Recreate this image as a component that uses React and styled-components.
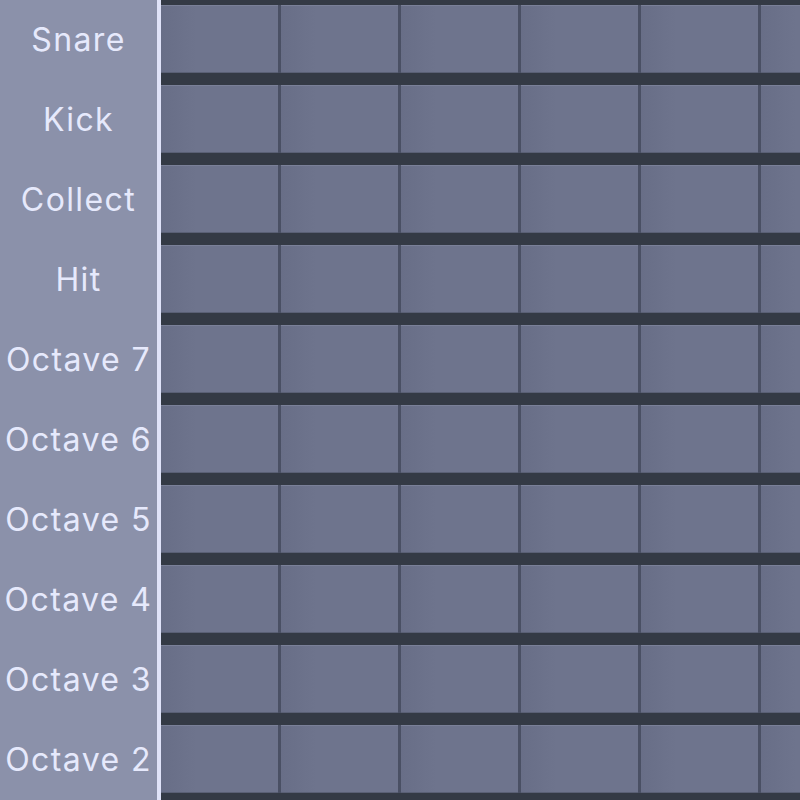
import React from 'react';
import styled, { createGlobalStyle } from 'styled-components';

const GlobalStyle = createGlobalStyle`
  html, body {
    margin: 0;
    padding: 0;
    background: #343a45;
    overflow: hidden;
  }
`;

const Layout = styled.div`
  display: flex;
  width: 800px;
  height: 800px;
  overflow: hidden;
`;

const Sidebar = styled.div`
  flex: 0 0 157px;
  background-color: #8b91aa;
  border-right: 4px solid #dfe2f8;
  display: flex;
  flex-direction: column;
`;

const Label = styled.div`
  height: 80px;
  padding-bottom: 2px;
  box-sizing: border-box;
  display: flex;
  align-items: center;
  justify-content: center;
  font-family: 'Inter', 'Noto Sans', sans-serif;
  font-size: 32px;
  letter-spacing: 1.4px;
  color: #e6e9fc;
  white-space: nowrap;
`;

const Grid = styled.div`
  flex: 1;
  display: flex;
  flex-direction: column;
  padding-top: 5px;
  background-color: #343a45;
  overflow: hidden;
`;

const Row = styled.div`
  display: flex;
  gap: 3px;
  height: 68px;
  margin-bottom: 12px;
  background-color: #4a5064;
  flex-shrink: 0;
`;

const Cell = styled.div`
  flex: 0 0 117px;
  height: 100%;
  box-sizing: border-box;
  background: linear-gradient(90deg, #686e87 0%, #6e748d 30%, #6e748d 100%);
  border-top: 1px solid #7a8098;
  border-bottom: 1px solid #5a6075;
`;

const tracks = [
  'Snare',
  'Kick',
  'Collect',
  'Hit',
  'Octave 7',
  'Octave 6',
  'Octave 5',
  'Octave 4',
  'Octave 3',
  'Octave 2',
];

const STEPS = 6;

export default function App() {
  return (
    <>
      <GlobalStyle />
      <Layout>
        <Sidebar>
          {tracks.map((name) => (
            <Label key={name}>{name}</Label>
          ))}
        </Sidebar>
        <Grid>
          {tracks.map((name) => (
            <Row key={name}>
              {Array.from({ length: STEPS }, (_, i) => (
                <Cell key={i} />
              ))}
            </Row>
          ))}
        </Grid>
      </Layout>
    </>
  );
}
